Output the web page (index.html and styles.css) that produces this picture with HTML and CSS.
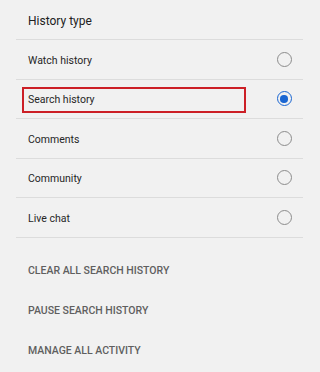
FILE: index.html
```html
<!DOCTYPE html>
<html lang="en">
<head>
    <meta charset="UTF-8">
    <meta name="viewport" content="width=device-width, initial-scale=1.0">
    <title>History type</title>
    <link rel="stylesheet" href="styles.css">
</head>

<body>
    <div id="panel">
        <h2 class="panel-title">History type</h2>

        <!-- volby typu historie -->
        <ul class="type-list">
            <li class="type-row">
                <span>Watch history</span>
                <span class="radio"></span>
            </li>
            <li class="type-row">
                <span>Search history</span>
                <span class="radio checked"></span>
                <span class="highlight"></span>
            </li>
            <li class="type-row">
                <span>Comments</span>
                <span class="radio"></span>
            </li>
            <li class="type-row">
                <span>Community</span>
                <span class="radio"></span>
            </li>
            <li class="type-row">
                <span>Live chat</span>
                <span class="radio"></span>
            </li>
        </ul>

        <!-- akce -->
        <div class="actions">
            <a href="#">Clear all search history</a>
            <a href="#">Pause search history</a>
            <a href="#">Manage all activity</a>
        </div>
    </div>
</body>
</html>
```

FILE: styles.css
```css
body {
    font-family: Roboto, "Noto Sans", sans-serif;
    background-color: #f1f1f1;
    color: #212121;
    margin: 0;
    padding: 0;
}

#panel {
    padding: 0 17px 0 16px;
}

.panel-title {
    margin: 0;
    height: 40px;
    line-height: 36px;
    padding: 3px 0 0 12px;
    font-size: 12px;
    font-weight: 400;
    border-bottom: 1px solid #dcdcdc;
    box-sizing: border-box;
}

.type-list {
    list-style: none;
    margin: 0;
    padding: 0;
}

.type-row {
    position: relative;
    display: flex;
    align-items: center;
    justify-content: space-between;
    height: 39.5px;
    padding: 2px 12px 0 12px;
    font-size: 10.5px;
    color: #262626;
    border-bottom: 1px solid #dcdcdc;
    box-sizing: border-box;
}

.radio {
    width: 15px;
    height: 15px;
    margin: -2px -0.5px 0 0;
    border: 1.5px solid #8c8c8c;
    border-radius: 50%;
    box-sizing: border-box;
    display: flex;
    align-items: center;
    justify-content: center;
}

.radio.checked {
    border-color: #1a66d2;
}

.radio.checked::after {
    content: "";
    width: 7.5px;
    height: 7.5px;
    border-radius: 50%;
    background-color: #1a66d2;
}

.highlight {
    position: absolute;
    left: 6px;
    top: 7px;
    width: 224px;
    height: 26px;
    border: 2px solid #cc1f26;
    box-sizing: border-box;
}

.actions {
    padding-top: 13.5px;
}

.actions a {
    display: block;
    height: 40px;
    line-height: 40px;
    padding-left: 12px;
    font-size: 10.5px;
    font-weight: 500;
    text-transform: uppercase;
    text-decoration: none;
    color: #5f5f5f;
}
```
